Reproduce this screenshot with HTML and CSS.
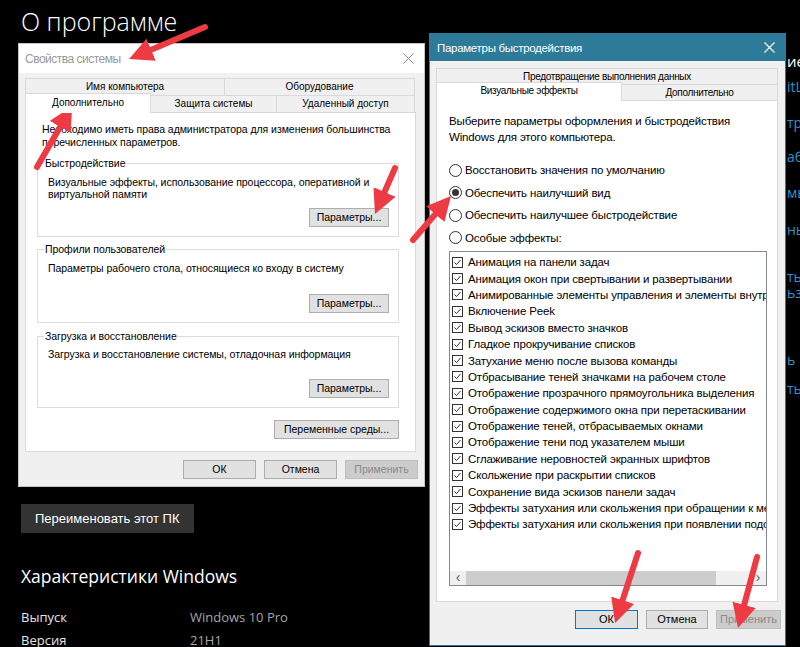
FILE: index.html
```html
<!DOCTYPE html>
<html lang="ru">
<head>
<meta charset="utf-8">
<title>О программе</title>
<link rel="stylesheet" href="styles.css">
</head>
<body>
<div class="page">
  <main class="main">
    <h1 class="title">О программе</h1>
    <button class="rename">Переименовать этот ПК</button>
    <h2 class="subtitle">Характеристики Windows</h2>
    <dl class="specs">
      <div class="spec"><dt>Выпуск</dt><dd>Windows 10 Pro</dd></div>
      <div class="spec"><dt>Версия</dt><dd>21H1</dd></div>
    </dl>
  </main>
  <aside class="side">
    <div class="side-head">ие</div>
    <div class="side-link">itL</div>
    <div class="side-link">тр</div>
    <div class="side-link">або</div>
    <div class="side-link">мы</div>
    <div class="side-link">ны</div>
    <div class="side-link">ть</div>
    <div class="side-link">ьзо</div>
    <div class="side-link">ь Г</div>
    <div class="side-link">ть</div>
  </aside>
</div>

<section class="win win-sys">
  <header class="titlebar tb-inactive">
    <span class="tb-title">Свойства системы</span>
    <svg class="tb-close" width="11" height="11" viewBox="0 0 11 11"><path d="M0.5 0.5L10.5 10.5M10.5 0.5L0.5 10.5"/></svg>
  </header>
  <div class="dlg-body">
    <div class="tabs">
      <div class="tab-row">
        <div class="tab w-name">Имя компьютера</div>
        <div class="tab w-hw">Оборудование</div>
      </div>
      <div class="tab-row">
        <div class="tab active w-adv">Дополнительно</div>
        <div class="tab w-prot">Защита системы</div>
        <div class="tab w-remote">Удаленный доступ</div>
      </div>
    </div>
    <div class="panel sys-panel">
      <p class="note">Необходимо иметь права администратора для изменения большинства<br>перечисленных параметров.</p>
      <fieldset class="group g1">
        <legend>Быстродействие</legend>
        <p class="grp-text">Визуальные эффекты, использование процессора, оперативной и<br>виртуальной памяти</p>
        <div class="grp-actions"><button class="btn btn-params">Параметры...</button></div>
      </fieldset>
      <fieldset class="group g2">
        <legend>Профили пользователей</legend>
        <p class="grp-text">Параметры рабочего стола, относящиеся ко входу в систему</p>
        <div class="grp-actions"><button class="btn btn-params">Параметры...</button></div>
      </fieldset>
      <fieldset class="group g3">
        <legend>Загрузка и восстановление</legend>
        <p class="grp-text">Загрузка и восстановление системы, отладочная информация</p>
        <div class="grp-actions"><button class="btn btn-params">Параметры...</button></div>
      </fieldset>
      <div class="env-row"><button class="btn btn-env">Переменные среды...</button></div>
    </div>
    <div class="dlg-buttons sys-buttons">
      <button class="btn btn-dlg">ОК</button>
      <button class="btn btn-dlg">Отмена</button>
      <button class="btn btn-dlg" disabled>Применить</button>
    </div>
  </div>
</section>

<section class="win win-perf">
  <header class="titlebar tb-active">
    <span class="tb-title">Параметры быстродействия</span>
    <svg class="tb-close" width="11" height="11" viewBox="0 0 11 11"><path d="M0.5 0.5L10.5 10.5M10.5 0.5L0.5 10.5"/></svg>
  </header>
  <div class="dlg-body perf-body">
    <div class="tabs perf-tabs">
      <div class="tab-row">
        <div class="tab w-dep">Предотвращение выполнения данных</div>
      </div>
      <div class="tab-row">
        <div class="tab active w-vis">Визуальные эффекты</div>
        <div class="tab w-more">Дополнительно</div>
      </div>
    </div>
    <div class="panel perf-panel">
      <p class="perf-intro">Выберите параметры оформления и быстродействия<br>Windows для этого компьютера.</p>
      <div class="radios">
        <div class="radio"><span class="radio-mark"></span>Восстановить значения по умолчанию</div>
        <div class="radio"><span class="radio-mark checked"></span>Обеспечить наилучший вид</div>
        <div class="radio"><span class="radio-mark"></span>Обеспечить наилучшее быстродействие</div>
        <div class="radio"><span class="radio-mark"></span>Особые эффекты:</div>
      </div>
      <div class="listbox">
        <ul class="items">
          <li class="item"><svg class="cb" width="11" height="11" viewBox="0 0 11 11"><rect x="0.5" y="0.5" width="10" height="10"/><path d="M2.5 5.5L4.5 7.5L8.5 3"/></svg>Анимация на панели задач</li>
          <li class="item"><svg class="cb" width="11" height="11" viewBox="0 0 11 11"><rect x="0.5" y="0.5" width="10" height="10"/><path d="M2.5 5.5L4.5 7.5L8.5 3"/></svg>Анимация окон при свертывании и развертывании</li>
          <li class="item"><svg class="cb" width="11" height="11" viewBox="0 0 11 11"><rect x="0.5" y="0.5" width="10" height="10"/><path d="M2.5 5.5L4.5 7.5L8.5 3"/></svg>Анимированные элементы управления и элементы внутри окна</li>
          <li class="item"><svg class="cb" width="11" height="11" viewBox="0 0 11 11"><rect x="0.5" y="0.5" width="10" height="10"/><path d="M2.5 5.5L4.5 7.5L8.5 3"/></svg>Включение Peek</li>
          <li class="item"><svg class="cb" width="11" height="11" viewBox="0 0 11 11"><rect x="0.5" y="0.5" width="10" height="10"/><path d="M2.5 5.5L4.5 7.5L8.5 3"/></svg>Вывод эскизов вместо значков</li>
          <li class="item"><svg class="cb" width="11" height="11" viewBox="0 0 11 11"><rect x="0.5" y="0.5" width="10" height="10"/><path d="M2.5 5.5L4.5 7.5L8.5 3"/></svg>Гладкое прокручивание списков</li>
          <li class="item"><svg class="cb" width="11" height="11" viewBox="0 0 11 11"><rect x="0.5" y="0.5" width="10" height="10"/><path d="M2.5 5.5L4.5 7.5L8.5 3"/></svg>Затухание меню после вызова команды</li>
          <li class="item"><svg class="cb" width="11" height="11" viewBox="0 0 11 11"><rect x="0.5" y="0.5" width="10" height="10"/><path d="M2.5 5.5L4.5 7.5L8.5 3"/></svg>Отбрасывание теней значками на рабочем столе</li>
          <li class="item"><svg class="cb" width="11" height="11" viewBox="0 0 11 11"><rect x="0.5" y="0.5" width="10" height="10"/><path d="M2.5 5.5L4.5 7.5L8.5 3"/></svg>Отображение прозрачного прямоугольника выделения</li>
          <li class="item"><svg class="cb" width="11" height="11" viewBox="0 0 11 11"><rect x="0.5" y="0.5" width="10" height="10"/><path d="M2.5 5.5L4.5 7.5L8.5 3"/></svg>Отображение содержимого окна при перетаскивании</li>
          <li class="item"><svg class="cb" width="11" height="11" viewBox="0 0 11 11"><rect x="0.5" y="0.5" width="10" height="10"/><path d="M2.5 5.5L4.5 7.5L8.5 3"/></svg>Отображение теней, отбрасываемых окнами</li>
          <li class="item"><svg class="cb" width="11" height="11" viewBox="0 0 11 11"><rect x="0.5" y="0.5" width="10" height="10"/><path d="M2.5 5.5L4.5 7.5L8.5 3"/></svg>Отображение тени под указателем мыши</li>
          <li class="item"><svg class="cb" width="11" height="11" viewBox="0 0 11 11"><rect x="0.5" y="0.5" width="10" height="10"/><path d="M2.5 5.5L4.5 7.5L8.5 3"/></svg>Сглаживание неровностей экранных шрифтов</li>
          <li class="item"><svg class="cb" width="11" height="11" viewBox="0 0 11 11"><rect x="0.5" y="0.5" width="10" height="10"/><path d="M2.5 5.5L4.5 7.5L8.5 3"/></svg>Скольжение при раскрытии списков</li>
          <li class="item"><svg class="cb" width="11" height="11" viewBox="0 0 11 11"><rect x="0.5" y="0.5" width="10" height="10"/><path d="M2.5 5.5L4.5 7.5L8.5 3"/></svg>Сохранение вида эскизов панели задач</li>
          <li class="item"><svg class="cb" width="11" height="11" viewBox="0 0 11 11"><rect x="0.5" y="0.5" width="10" height="10"/><path d="M2.5 5.5L4.5 7.5L8.5 3"/></svg>Эффекты затухания или скольжения при обращении к меню</li>
          <li class="item"><svg class="cb" width="11" height="11" viewBox="0 0 11 11"><rect x="0.5" y="0.5" width="10" height="10"/><path d="M2.5 5.5L4.5 7.5L8.5 3"/></svg>Эффекты затухания или скольжения при появлении подсказок</li>
        </ul>
        <div class="hscroll">
          <span class="sb-arrow">‹</span>
          <span class="sb-thumb"></span>
          <span class="sb-space"></span>
          <span class="sb-arrow">›</span>
        </div>
      </div>
    </div>
    <div class="dlg-buttons perf-buttons">
      <button class="btn btn-ok">ОК</button>
      <button class="btn btn-cancel">Отмена</button>
      <button class="btn btn-apply" disabled>Применить</button>
    </div>
  </div>
</section>

<svg class="arrows" width="800" height="647" viewBox="0 0 800 647" aria-hidden="true">
  <defs>
    <marker id="ah" viewBox="0 0 10 10" refX="4" refY="5" markerWidth="24" markerHeight="24" markerUnits="userSpaceOnUse" orient="auto">
      <path d="M0,0 L10,5 L0,10 Z" fill="#ee3a43"/>
    </marker>
  </defs>
  <g class="arrow-lines" marker-end="url(#ah)">
    <line x1="205" y1="27" x2="142.3" y2="53.5"/>
    <line x1="37" y1="167" x2="65" y2="118.6"/>
    <line x1="395" y1="168" x2="380.7" y2="200.8"/>
    <line x1="413" y1="240" x2="441.6" y2="206.9"/>
    <line x1="638" y1="553" x2="619.6" y2="609.3"/>
    <line x1="757" y1="557" x2="741.7" y2="614.1"/>
  </g>
</svg>
</body>
</html>
```

FILE: styles.css
```css
* { box-sizing: border-box; }
html, body { margin: 0; }
body {
  width: 800px;
  height: 647px;
  overflow: hidden;
  position: relative;
  background: #000;
  color: #fff;
  font-family: "Open Sans", "Noto Sans", sans-serif;
}

/* ---------- Settings page behind ---------- */
.page { display: flex; height: 647px; }
.main { flex: 0 0 786px; padding: 4px 0 0 21px; }
.title {
  margin: 0;
  font-weight: 300;
  font-size: 25px;
  line-height: 34px;
  color: #fff;
}
.rename {
  display: block;
  margin-top: 466px;
  height: 29px;
  padding: 0 14px;
  border: 0;
  background: #333;
  color: #fff;
  font: 13px/29px "Liberation Sans", Arial, sans-serif;
}
.subtitle {
  margin: 29px 0 0;
  font-weight: 400;
  font-size: 17.5px;
  line-height: 28px;
}
.specs { margin: 21px 0 0; font-size: 13px; line-height: 13px; }
.spec { display: flex; }
.spec + .spec { margin-top: 10px; }
.spec dt { width: 169px; color: #e6e6e6; }
.spec dd { margin: 0; color: #a6a6a6; }

.side {
  flex: 1;
  overflow: hidden;
  white-space: nowrap;
  padding: 53px 0 0 1px;
  font-size: 14px;
  line-height: 16px;
  color: #3591c7;
}
.side-head { color: #fff; font-size: 15px; }
.side-link:nth-child(2) { margin-top: 10px; }
.side-link:nth-child(3) { margin-top: 20px; }
.side-link:nth-child(4) { margin-top: 18px; }
.side-link:nth-child(5) { margin-top: 20px; }
.side-link:nth-child(6) { margin-top: 21px; }
.side-link:nth-child(7) { margin-top: 31px; }
.side-link:nth-child(8) { margin-top: 0; }
.side-link:nth-child(9) { margin-top: 51px; }
.side-link:nth-child(10) { margin-top: 13px; }

/* ---------- Windows ---------- */
.win {
  position: absolute;
  display: flex;
  flex-direction: column;
  color: #000;
  font-family: "Liberation Sans", Arial, sans-serif;
  background: #f0f0f0;
}
.win-sys {
  left: 18px; top: 43px;
  width: 407px; height: 444px;
  border: 1px solid #c4c4c4;
  font-size: 10.5px;
  letter-spacing: -0.05px;
}
.win-perf {
  left: 429px; top: 33px;
  width: 357px; height: 613px;
  border: 1px solid #2d7b99;
  font-size: 11.5px;
  letter-spacing: -0.15px;
}

.titlebar {
  display: flex;
  align-items: center;
  justify-content: space-between;
  flex: none;
}
.tb-inactive { height: 29px; background: #fff; padding: 0 10px 0 6px; }
.tb-inactive .tb-title { color: #999; font-size: 12px; letter-spacing: -0.5px; }
.tb-inactive .tb-close path { stroke: #8c8c8c; stroke-width: 1; fill: none; }
.tb-active { height: 27px; background: #2d7b99; padding: 0 10px 0 7px; }
.tb-active .tb-title { color: #fff; font-size: 11.5px; letter-spacing: -0.3px; }
.tb-active .tb-close path { stroke: #fff; stroke-width: 1.1; fill: none; }

.dlg-body { flex: 1; display: flex; flex-direction: column; padding: 5px 8px 0 6px; }
.perf-body { padding: 7px 7px 0 6px; }

/* tabs */
.tab-row { display: flex; align-items: flex-start; }
.tab {
  height: 17px;
  border: 1px solid #d9d9d9;
  border-bottom: 0;
  margin-left: -1px;
  background: #f0f0f0;
  text-align: center;
  line-height: 16px;
  font-size: 10px;
  letter-spacing: 0;
  white-space: nowrap;
}
.tab:first-child { margin-left: 0; }
.tab.active {
  position: relative;
  z-index: 1;
  height: 20px;
  margin-top: -2px;
  margin-bottom: -1px;
  line-height: 17px;
  background: #fff;
}
.w-name { width: 200px; }
.w-hw { width: 191px; }
.w-adv { width: 126px; }
.w-prot { width: 127px; }
.w-remote { width: 139px; }

.perf-tabs .tab { font-size: 10px; letter-spacing: -0.3px; }
.w-dep { width: 342px; height: 16px; line-height: 15px; }
.perf-tabs .tab-row + .tab-row .tab { height: 16px; line-height: 15px; }
.perf-tabs .tab-row + .tab-row .tab.active { height: 19px; margin-top: -2px; line-height: 16px; }
.w-vis { width: 186px; }
.w-more { width: 157px; }

.panel {
  border: 1px solid #d9d9d9;
  background: #fff;
  flex: none;
}
.sys-panel { height: 340px; padding: 10px 16px 0 0; }

.note { margin: 0 0 0 16px; line-height: 13px; white-space: nowrap; }

.group {
  margin: 8px 0 0 11px;
  padding: 0 9px 9px 10px;
  border: 1px solid #dcdcdc;
  min-width: 0;
}
.group legend { padding: 0 1px; margin-left: -4px; line-height: 13px; }
.grp-text { margin: 6px 0 0; line-height: 12px; white-space: nowrap; }
.grp-actions { display: flex; justify-content: flex-end; }
.g1 .grp-actions { margin-top: 8px; }
.g2 { margin-top: 6px; }
.g2 .grp-actions { margin-top: 20px; }
.g3 { margin-top: 7px; }
.g3 .grp-text { margin-top: 5px; }
.g3 .grp-actions { margin-top: 19px; }

.btn {
  height: 19px;
  padding: 0;
  border: 1px solid #adadad;
  background: #e1e1e1;
  color: #000;
  font: 10.5px/17px "Liberation Sans", Arial, sans-serif;
  letter-spacing: 0;
}
.btn:disabled { background: #cccccc; border-color: #bfbfbf; color: #8a8a8a; }
.btn-params { width: 80px; }
.env-row { display: flex; justify-content: flex-end; margin-top: 12px; }
.btn-env { width: 125px; }

.dlg-buttons { display: flex; justify-content: flex-end; gap: 8px; margin-top: 8px; }
.sys-buttons { margin-right: -2px; }
.btn-dlg { width: 73px; }

/* performance dialog */
.perf-panel { height: 502px; padding: 12px 10px 0 12px; }
.perf-intro { margin: 0; line-height: 16px; white-space: nowrap; }
.radios { margin-top: 14px; }
.radio { display: flex; align-items: center; gap: 3px; height: 22.5px; white-space: nowrap; }
.radio-mark {
  width: 13px; height: 13px;
  border: 1px solid #333;
  border-radius: 50%;
  background: #fff;
  display: flex;
  align-items: center;
  justify-content: center;
}
.radio-mark.checked::after {
  content: "";
  width: 7px; height: 7px;
  border-radius: 50%;
  background: #333;
}
.listbox {
  margin-top: 2px;
  width: 318px;
  height: 335px;
  border: 1px solid #828790;
  background: #fff;
  display: flex;
  flex-direction: column;
}
.items { flex: 1; margin: 0; padding: 2px 0 0 2px; list-style: none; overflow: hidden; }
.item {
  display: flex;
  align-items: center;
  gap: 5px;
  height: 16.4px;
  white-space: nowrap;
  overflow: hidden;
}
.cb { flex: none; }
.cb rect { fill: #fff; stroke: #333; stroke-width: 1; }
.cb path { fill: none; stroke: #333; stroke-width: 1; }

.hscroll { height: 14px; display: flex; background: #f0f0f0; flex: none; }
.sb-arrow { width: 16px; text-align: center; color: #606060; font-size: 14px; line-height: 13px; }
.sb-thumb { width: 250px; background: #cdcdcd; }
.sb-space { flex: 1; }

.perf-buttons { margin-right: -3px; }
.perf-buttons .btn { font-size: 11px; }
.btn-ok { width: 63px; border-color: #0078d7; }
.btn-cancel { width: 62px; }
.btn-apply { width: 65px; }

/* annotation arrows */
.arrows { position: absolute; left: 0; top: 0; pointer-events: none; }
.arrow-lines line { stroke: #ee3a43; stroke-width: 6; stroke-linecap: round; }
```
